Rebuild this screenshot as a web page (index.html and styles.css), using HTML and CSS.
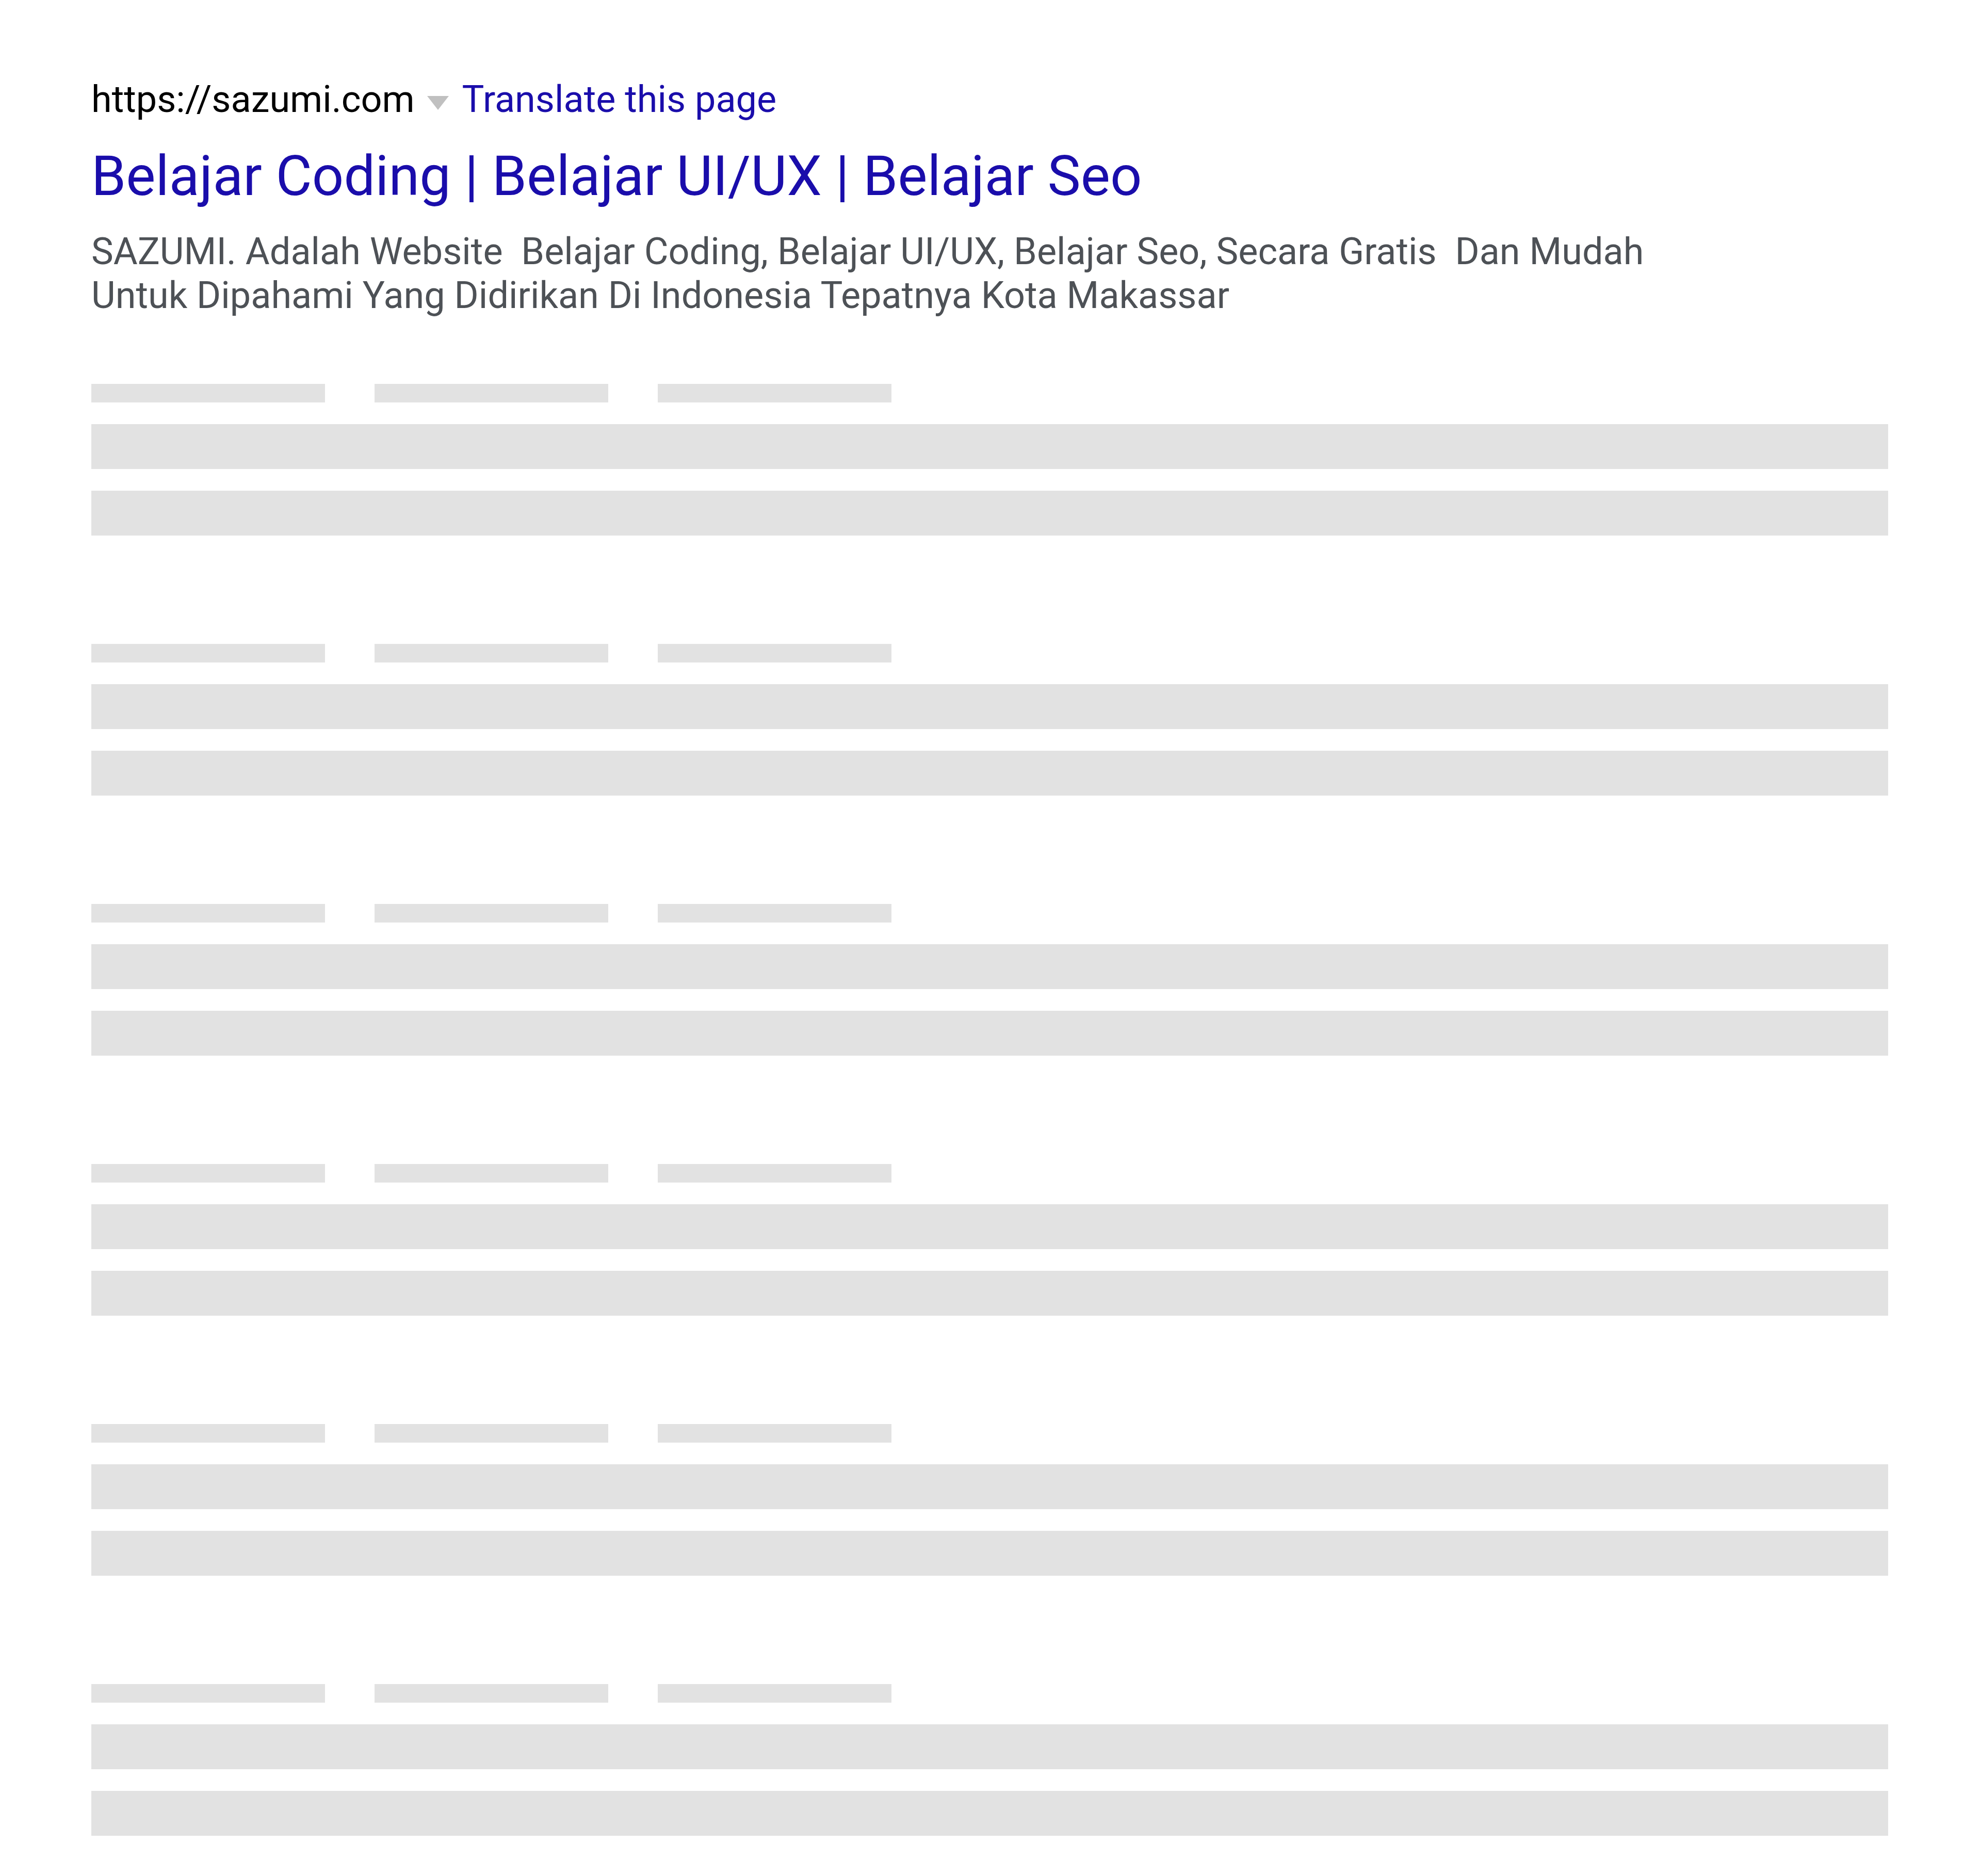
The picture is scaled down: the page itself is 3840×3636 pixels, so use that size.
FILE: index.html
```html
<!DOCTYPE html>
<html lang="id">
<head>
<meta charset="utf-8">
<title>Belajar Coding | Belajar UI/UX | Belajar Seo</title>
<link rel="stylesheet" href="styles.css">
</head>
<body>
<main class="page">
  <section class="result">
    <div class="url-line">
      <span class="url">https://sazumi.com</span>
      <span class="caret" aria-hidden="true"></span>
      <a class="translate" href="#">Translate this page</a>
    </div>
    <h1 class="title"><a href="#">Belajar Coding | Belajar UI/UX | Belajar Seo</a></h1>
    <p class="desc">SAZUMI. Adalah Website&nbsp; Belajar Coding, Belajar UI/UX, Belajar Seo, Secara Gratis&nbsp; Dan Mudah<br>Untuk Dipahami Yang Didirikan Di Indonesia Tepatnya Kota Makassar</p>
  </section>

  <section class="skeletons">
    <div class="sk-group">
      <div class="sk-row"><span class="sk-short"></span><span class="sk-short"></span><span class="sk-short"></span></div>
      <div class="sk-long"></div>
      <div class="sk-long"></div>
    </div>
    <div class="sk-group">
      <div class="sk-row"><span class="sk-short"></span><span class="sk-short"></span><span class="sk-short"></span></div>
      <div class="sk-long"></div>
      <div class="sk-long"></div>
    </div>
    <div class="sk-group">
      <div class="sk-row"><span class="sk-short"></span><span class="sk-short"></span><span class="sk-short"></span></div>
      <div class="sk-long"></div>
      <div class="sk-long"></div>
    </div>
    <div class="sk-group">
      <div class="sk-row"><span class="sk-short"></span><span class="sk-short"></span><span class="sk-short"></span></div>
      <div class="sk-long"></div>
      <div class="sk-long"></div>
    </div>
    <div class="sk-group">
      <div class="sk-row"><span class="sk-short"></span><span class="sk-short"></span><span class="sk-short"></span></div>
      <div class="sk-long"></div>
      <div class="sk-long"></div>
    </div>
    <div class="sk-group">
      <div class="sk-row"><span class="sk-short"></span><span class="sk-short"></span><span class="sk-short"></span></div>
      <div class="sk-long"></div>
      <div class="sk-long"></div>
    </div>
  </section>
</main>
</body>
</html>
```
FILE: styles.css
```css
* { box-sizing: border-box; }

html, body {
  margin: 0;
  padding: 0;
  background: #ffffff;
}

body {
  font-family: Roboto, "Noto Sans", "Liberation Sans", Arial, sans-serif;
}

.page {
  padding: 150px 180px 78px 177px;
}

.result {
  display: flex;
  flex-direction: column;
}

.url-line {
  display: flex;
  align-items: flex-start;
  font-size: 72px;
  line-height: 86px;
}

.url {
  color: #000000;
}

.caret {
  width: 0;
  height: 0;
  margin: 36px 26px 0 24px;
  border-left: 21.5px solid transparent;
  border-right: 21.5px solid transparent;
  border-top: 27px solid #c0c0c0;
}

.translate {
  color: #1a0dab;
  text-decoration: none;
}

.title {
  margin: 40px 0 0;
  font-size: 108px;
  font-weight: 400;
  line-height: 130px;
}

.title a {
  color: #1a0dab;
  text-decoration: none;
}

.desc {
  margin: 39px 0 0;
  font-size: 72px;
  line-height: 85px;
  color: #4d5156;
}

.skeletons {
  margin-top: 129px;
  display: flex;
  flex-direction: column;
  gap: 210px;
}

.sk-group {
  display: flex;
  flex-direction: column;
  gap: 42px;
}

.sk-row {
  display: flex;
  gap: 96px;
}

.sk-short {
  display: block;
  width: 453px;
  height: 36px;
  background: #e2e2e2;
}

.sk-long {
  height: 87px;
  background: #e2e2e2;
}
```
